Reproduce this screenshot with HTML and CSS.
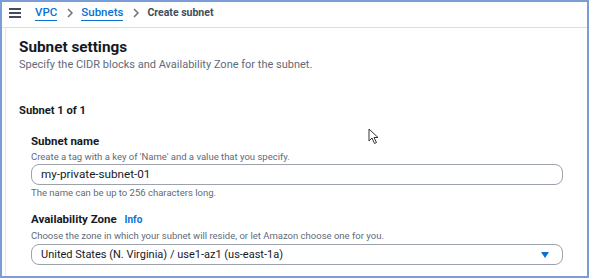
FILE: index.html
```html
<!DOCTYPE html>
<html lang="en">
<head>
    <meta charset="UTF-8">
    <title>Create subnet</title>
    <link rel="stylesheet" href="styles.css">
</head>
<body>
    <div class="frame">
        <!-- Breadcrumb bar -->
        <div class="topbar">
            <span class="menu"><i></i><i></i><i></i></span>
            <a class="crumb">VPC</a>
            <svg class="sep" width="6" height="10" viewBox="0 0 6 10"><path d="M1 1 L5 5 L1 9" fill="none" stroke="#687078" stroke-width="1.5"/></svg>
            <a class="crumb">Subnets</a>
            <svg class="sep" width="6" height="10" viewBox="0 0 6 10"><path d="M1 1 L5 5 L1 9" fill="none" stroke="#687078" stroke-width="1.5"/></svg>
            <span class="current">Create subnet</span>
        </div>

        <!-- Settings panel -->
        <div class="panel">
            <h2>Subnet settings</h2>
            <p class="desc">Specify the CIDR blocks and Availability Zone for the subnet.</p>

            <h3>Subnet 1 of 1</h3>

            <div class="field">
                <label>Subnet name</label>
                <p class="hint">Create a tag with a key of 'Name' and a value that you specify.</p>
                <div class="input">my-private-subnet-01</div>
                <p class="hint after">The name can be up to 256 characters long.</p>
            </div>

            <div class="field">
                <label>Availability Zone <span class="info">Info</span></label>
                <p class="hint">Choose the zone in which your subnet will reside, or let Amazon choose one for you.</p>
                <div class="input select">
                    <span>United States (N. Virginia) / use1-az1 (us-east-1a)</span>
                    <span class="caret"></span>
                </div>
            </div>
        </div>

        <!-- mouse pointer -->
        <svg class="pointer" width="12" height="17" viewBox="0 0 12 17">
            <path d="M1 1 L1 13 L4 10 L6.5 15.5 L8.5 14.5 L6 9.5 L10 9.5 Z" fill="#fff" stroke="#333" stroke-width="1"/>
        </svg>
    </div>
</body>
</html>
```

FILE: styles.css
```css
/* Page */
html, body {
    margin: 0;
    padding: 0;
    background-color: #fff;
}

body {
    font-family: Roboto, "Open Sans", sans-serif;
    color: #16191f;
}

.frame {
    position: relative;
    box-sizing: border-box;
    width: 589px;
    height: 278px;
    border: 2px solid #7b9dd6;
    overflow: hidden;
}

/* Breadcrumb bar */
.topbar {
    box-sizing: border-box;
    display: flex;
    align-items: center;
    height: 26px;
    padding: 0 0 4px 7px;
    border-bottom: 1px solid #dcdfe2;
    font-size: 11.5px;
}

.menu {
    display: flex;
    flex-direction: column;
    gap: 2px;
    width: 12px;
    margin-right: 14px;
}

.menu i {
    display: block;
    height: 2px;
    background-color: #414d5c;
}

.crumb {
    color: #0972d3;
    font-weight: 500;
    border-bottom: 1px solid #0972d3;
    line-height: 15px;
}

.sep {
    margin: 0 8px 0 10px;
}

.current {
    color: #414d5c;
    font-weight: 700;
    font-size: 10.5px;
}

/* Panel */
.panel {
    margin-left: 3px;
    border-left: 1px solid #e6e8ea;
    padding: 9px 0 0 13px;
    height: 100%;
}

.panel h2 {
    margin: 0;
    font-size: 15.3px;
    font-weight: 700;
    line-height: 21px;
}

.desc {
    margin: 0;
    font-size: 11px;
    color: #5f6b7a;
    line-height: 13px;
}

.panel h3 {
    margin: 33px 0 0;
    font-size: 11.2px;
    font-weight: 700;
    line-height: 14px;
}

.field {
    margin: 16px 0 0 12px;
    width: 532px;
}

.field + .field {
    margin-top: 13px;
}

.field label {
    display: block;
    font-size: 11.5px;
    font-weight: 700;
    line-height: 14px;
}

.info {
    color: #0972d3;
    font-size: 10px;
    margin-left: 5px;
}

.hint {
    margin: 2px 0 0;
    font-size: 9.5px;
    color: #5f6b7a;
    line-height: 13px;
}

.hint.after {
    margin-top: 1px;
}

.input {
    box-sizing: border-box;
    height: 21px;
    margin-top: 1px;
    border: 1px solid #9ba2ab;
    border-radius: 8px;
    padding: 0 9px;
    font-size: 11.7px;
    line-height: 19px;
    display: flex;
    justify-content: space-between;
    align-items: center;
}

.select {
    margin-top: 2px;
    font-size: 11px;
}

.caret {
    width: 0;
    height: 0;
    border-left: 4.5px solid transparent;
    border-right: 4.5px solid transparent;
    border-top: 6px solid #0972d3;
    margin-right: 4px;
}

.pointer {
    position: absolute;
    left: 366px;
    top: 126px;
}
```
